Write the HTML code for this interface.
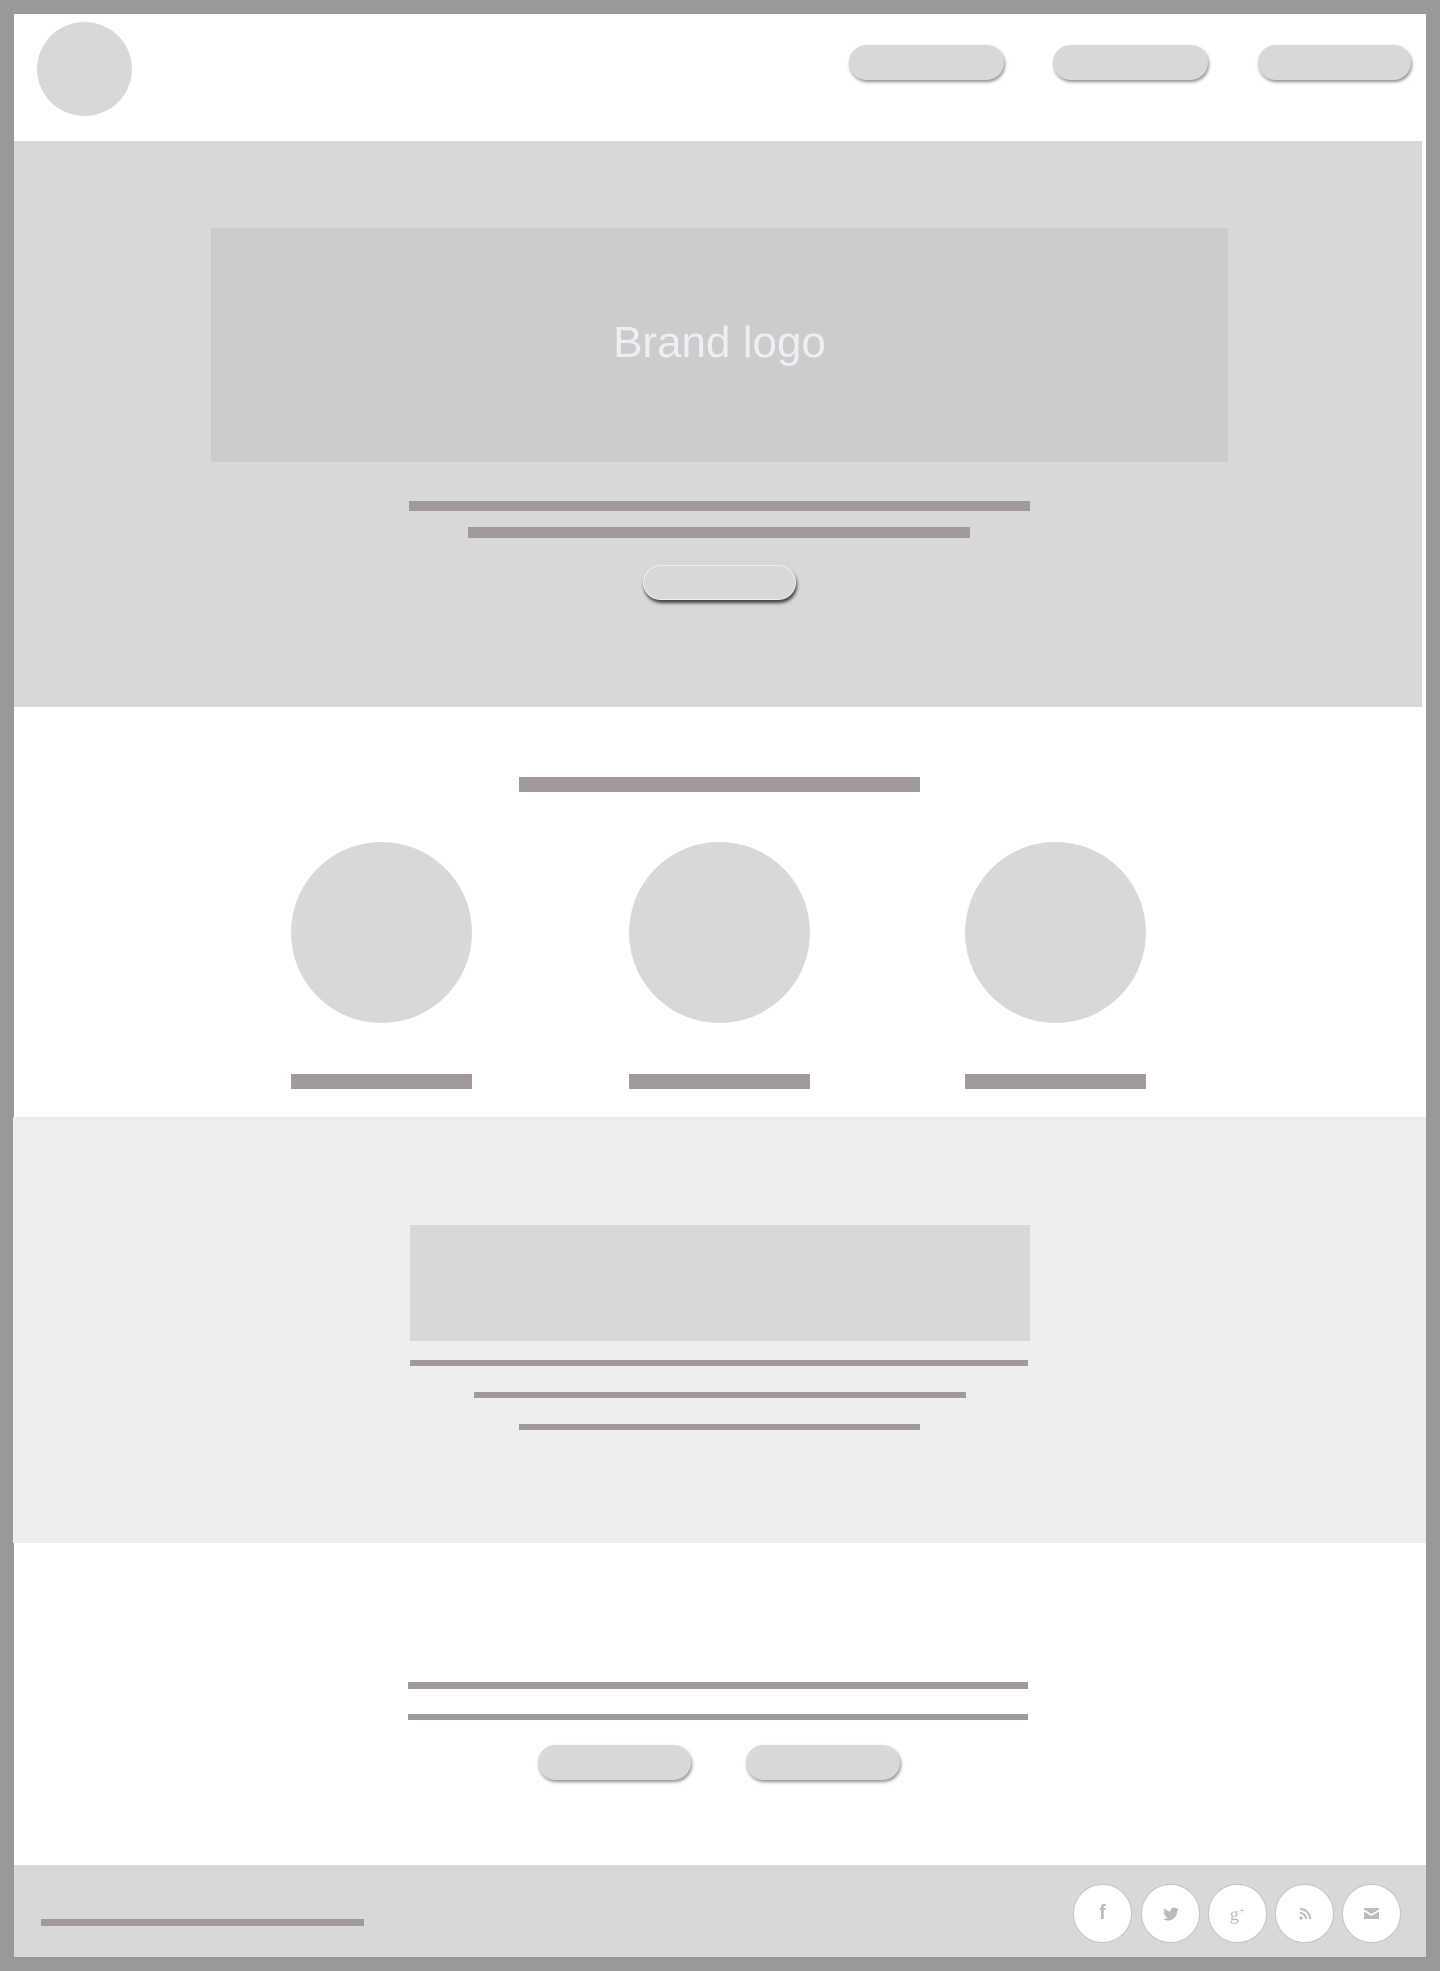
<!DOCTYPE html>
<html><head><style>
*{margin:0;padding:0;box-sizing:border-box}
body{width:1440px;height:1971px;background:#999;position:relative;overflow:hidden;font-family:"Liberation Sans",sans-serif}
div{position:absolute}
.w{left:14px;top:14px;width:1412px;height:1943px;background:#fff}
.bar{background:#a09a9a}
.btn{background:#d8d8d8;border-radius:18px;box-shadow:1px 2px 3px rgba(0,0,0,.45)}
.c{border-radius:50%;background:#d8d8d8}
.ic{width:59px;height:59px;border-radius:50%;background:#fff;border:1px solid #c4c4c4;top:1884px;color:#bbb;text-align:center;line-height:57px;font-size:16px;font-weight:bold}
</style></head><body>
<div class="w"></div>
<div class="c" style="left:37px;top:22px;width:95px;height:94px"></div>
<div class="btn" style="left:849px;top:45px;width:155px;height:35px"></div>
<div class="btn" style="left:1053px;top:45px;width:155px;height:35px"></div>
<div class="btn" style="left:1258px;top:45px;width:153px;height:35px"></div>
<div style="left:14px;top:141px;width:1408px;height:566px;background:#d8d8d8"></div>
<div style="left:211px;top:228px;width:1017px;height:234px;background:#cccccc;color:#eeeef4;font-size:44px;text-align:center;line-height:230px">Brand logo</div>
<div class="bar" style="left:409px;top:501px;width:621px;height:10px"></div>
<div class="bar" style="left:468px;top:527px;width:502px;height:11px"></div>
<div class="btn" style="left:643px;top:565px;width:153px;height:35px;border:1px solid #f0f0f0;box-shadow:1px 3px 3px rgba(0,0,0,.7)"></div>
<div class="bar" style="left:519px;top:777px;width:401px;height:15px"></div>
<div class="c" style="left:291px;top:842px;width:181px;height:181px"></div>
<div class="c" style="left:629px;top:842px;width:181px;height:181px"></div>
<div class="c" style="left:965px;top:842px;width:181px;height:181px"></div>
<div class="bar" style="left:291px;top:1074px;width:181px;height:15px"></div>
<div class="bar" style="left:629px;top:1074px;width:181px;height:15px"></div>
<div class="bar" style="left:965px;top:1074px;width:181px;height:15px"></div>
<div style="left:13px;top:1117px;width:1413px;height:426px;background:#eeeeee"></div>
<div style="left:410px;top:1225px;width:620px;height:116px;background:#d8d8d8"></div>
<div class="bar" style="left:410px;top:1360px;width:618px;height:6px"></div>
<div class="bar" style="left:474px;top:1392px;width:492px;height:6px"></div>
<div class="bar" style="left:519px;top:1424px;width:401px;height:6px"></div>
<div class="bar" style="left:408px;top:1682px;width:620px;height:7px"></div>
<div class="bar" style="left:408px;top:1714px;width:620px;height:6px"></div>
<div class="btn" style="left:538px;top:1745px;width:153px;height:35px"></div>
<div class="btn" style="left:746px;top:1745px;width:154px;height:35px"></div>
<div style="left:14px;top:1865px;width:1412px;height:92px;background:#d8d8d8"></div>
<div class="bar" style="left:41px;top:1919px;width:323px;height:7px"></div>
<div class="ic" style="left:1073px;font-size:20px">f</div>
<div class="ic" style="left:1141px"><svg width="16" height="14" viewBox="0 0 16 14" style="vertical-align:middle"><path d="M16 2a6 6 0 0 1-2 .5A3 3 0 0 0 15.3.8a6 6 0 0 1-2 .8A3.2 3.2 0 0 0 7.8 4.5 9 9 0 0 1 1.1 1.1a3.2 3.2 0 0 0 1 4.3 3 3 0 0 1-1.5-.4 3.2 3.2 0 0 0 2.6 3.2 3 3 0 0 1-1.5.1 3.2 3.2 0 0 0 3 2.2A6.5 6.5 0 0 1 0 12a9 9 0 0 0 14-8z" fill="#bbb"/></svg></div>
<div class="ic" style="left:1208px;font-family:'Liberation Serif',serif;font-weight:normal;font-size:18px;line-height:52px">g<span style="font-size:11px;vertical-align:6px">+</span></div>
<div class="ic" style="left:1275px"><svg width="12" height="12" viewBox="0 0 12 12" style="vertical-align:middle"><circle cx="2" cy="10" r="1.6" fill="#bbb"/><path d="M1 5a6 6 0 0 1 6 6M1 1a10 10 0 0 1 10 10" stroke="#bbb" stroke-width="2" fill="none"/></svg></div>
<div class="ic" style="left:1342px"><svg width="15" height="11" viewBox="0 0 15 11" style="vertical-align:middle"><path d="M0 0h15v1.5L7.5 6 0 1.5zM0 3.5l7.5 4.5 7.5-4.5V11H0z" fill="#bbb"/></svg></div>
</body></html>
